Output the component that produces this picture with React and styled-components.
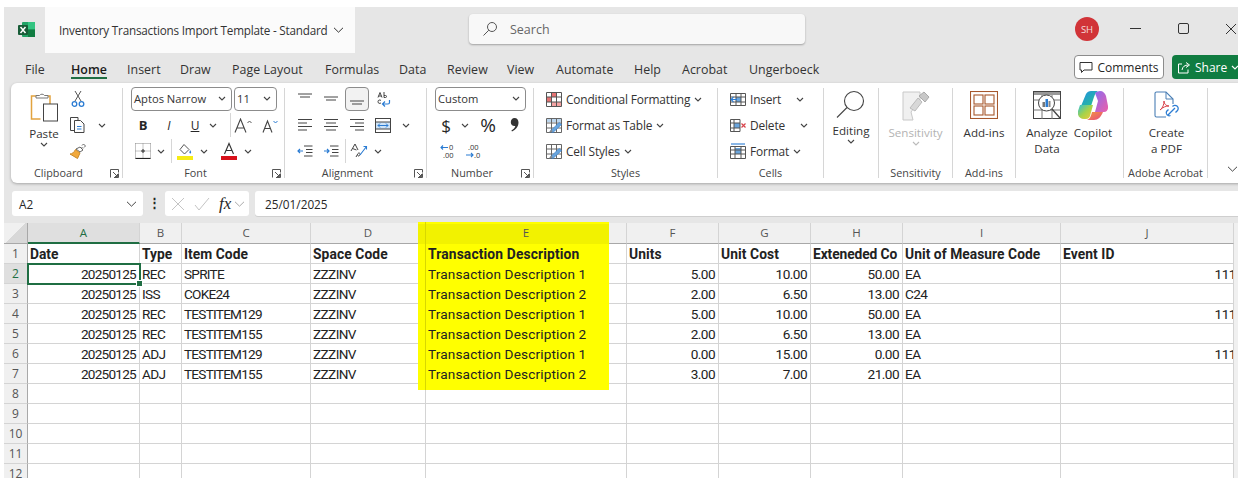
import React from "react";
import styled, { createGlobalStyle } from "styled-components";

const GlobalStyle = createGlobalStyle`
  html, body { margin: 0; padding: 0; background: #fff; }
  body { font-family: "Open Sans", "Liberation Sans", sans-serif; }
`;

const Window = styled.div`
  position: relative;
  margin: 7px 0 0 4px;
  width: 1234px;
  height: 471px;
  background: #e6e6e6;
  overflow: hidden;
  color: #262626;
  font-size: 12px;
`;

const TitleBar = styled.div`
  display: flex;
  align-items: center;
  height: 46px;
`;

const AppIcon = styled.div`
  width: 41px;
  flex: none;
  display: flex;
  justify-content: center;
  padding-left: 4px;
  box-sizing: border-box;
  margin-top: -1px;
`;

const DocTab = styled.div`
  width: 310px;
  flex: none;
  height: 46px;
  background: #fbfbfb;
  display: flex;
  align-items: center;
  padding: 0 0 1px 14px;
  box-sizing: border-box;
  gap: 5px;
  font-size: 11.7px;
  letter-spacing: -0.2px;
  color: #333;
`;

const SearchBox = styled.div`
  margin-left: 114px;
  flex: none;
  width: 336px;
  height: 30px;
  margin-top: -2px;
  background: #f8f8f8;
  border-radius: 4px;
  box-shadow: 0 1px 2px rgba(0, 0, 0, 0.3);
  display: flex;
  align-items: center;
  padding-left: 13px;
  box-sizing: border-box;
  gap: 12px;
  color: #666;
  font-size: 12.5px;
`;

const Avatar = styled.div`
  margin-left: 270px;
  margin-top: -2px;
  width: 24px;
  height: 24px;
  flex: none;
  border-radius: 50%;
  background: #d13438;
  color: #f6dede;
  font-size: 9.5px;
  display: flex;
  align-items: center;
  justify-content: center;
`;

const WinButtons = styled.div`
  margin-left: 12px;
  margin-top: -2px;
  display: flex;
  flex: none;
`;

const WinButton = styled.div`
  width: 48px;
  display: flex;
  justify-content: center;
`;

const MenuBar = styled.div`
  display: flex;
  align-items: center;
  height: 30px;
`;

const MenuTab = styled.div`
  position: relative;
  flex: none;
  width: ${(p) => p.$w}px;
  height: 30px;
  line-height: 33px;
  font-size: 12.4px;
  color: ${(p) => (p.$active ? "#1a1a1a" : "#333")};
  font-weight: ${(p) => (p.$active ? 600 : 400)};
  letter-spacing: 0.05px;
  ${(p) =>
    p.$active &&
    `&::after {
      content: "";
      position: absolute;
      left: 0;
      bottom: 4px;
      width: 36px;
      height: 2px;
      background: #1f6e43;
    }`}
`;

const MenuFirst = styled.div`
  width: 21px;
  flex: none;
`;

const CommentsButton = styled.div`
  margin-left: 253px;
  flex: none;
  width: 90px;
  height: 24px;
  box-sizing: border-box;
  margin-top: -2px;
  background: #fff;
  border: 1px solid #8c8c8c;
  border-radius: 4px;
  display: flex;
  align-items: center;
  justify-content: center;
  gap: 4px;
  font-size: 12px;
`;

const ShareButton = styled.div`
  margin-left: 8px;
  flex: none;
  width: 70px;
  height: 24px;
  margin-top: -2px;
  background: #107c41;
  border-radius: 4px;
  color: #fff;
  display: flex;
  align-items: center;
  padding-left: 5px;
  box-sizing: border-box;
  gap: 4px;
  font-size: 12px;
`;

const Ribbon = styled.div`
  margin-left: 7px;
  width: 1240px;
  height: 100px;
  box-sizing: border-box;
  padding: 5px 0;
  background: #fff;
  border-radius: 6px;
  box-shadow: 0 1px 3px rgba(0, 0, 0, 0.28);
  display: flex;
`;

const Group = styled.div`
  flex: none;
  width: ${(p) => p.$w}px;
  height: 90px;
  box-sizing: border-box;
  border-right: 1px solid ${(p) => (p.$plain ? "transparent" : "#d6d6d6")};
  display: flex;
  flex-direction: column;
`;

const GroupBody = styled.div`
  margin-top: -2px;
  height: 80px;
  display: flex;
  flex: none;
`;

const GroupLabel = styled.div`
  display: flex;
  height: 12px;
  line-height: 14px;
  font-size: 10.8px;
  color: #444;
`;

const LabelText = styled.div`
  flex: 1;
  text-align: center;
  white-space: nowrap;
`;

const Launcher = styled.div`
  width: 16px;
  flex: none;
  display: flex;
  align-items: center;
  justify-content: center;
  padding-top: 2px;
`;

const Stack = styled.div`
  display: flex;
  flex-direction: column;
  padding-left: ${(p) => p.$pl || 0}px;
`;

const ToolRow = styled.div`
  height: 26px;
  display: flex;
  align-items: center;
  flex: none;
  padding-left: ${(p) => p.$pl || 0}px;
`;

const Tool = styled.div`
  flex: none;
  width: ${(p) => p.$w || 24}px;
  height: 24px;
  display: flex;
  align-items: center;
  justify-content: center;
  box-sizing: border-box;
  font-size: ${(p) => p.$size || 12}px;
  ${(p) => p.$on && "background: #f2f2f2; border: 1px solid #8c8c8c; border-radius: 4px;"}
`;

const Divider = styled.div`
  flex: none;
  width: 1px;
  height: 24px;
  background: #d6d6d6;
`;

const SelectBox = styled.div`
  flex: none;
  width: ${(p) => p.$w}px;
  height: 24px;
  margin-right: ${(p) => p.$mr || 0}px;
  box-sizing: border-box;
  border: 1px solid #8c8c8c;
  border-radius: 4px;
  display: flex;
  align-items: center;
  justify-content: space-between;
  padding: 0 5px 1px 2px;
  font-size: 11.2px;
  color: #333;
`;

const StyleItem = styled.div`
  height: 26px;
  display: flex;
  align-items: center;
  gap: 4px;
  white-space: nowrap;
  font-size: 11.9px;
  letter-spacing: -0.15px;
  color: #333;
`;

const ItemCaret = styled.span`
  display: inline-flex;
  margin-left: ${(p) => p.$ml || 0}px;
`;

const BigTool = styled.div`
  flex: none;
  width: ${(p) => p.$w}px;
  margin-left: ${(p) => p.$ml || 0}px;
  display: flex;
  flex-direction: column;
  align-items: center;
  padding-top: ${(p) => p.$pt || 5}px;
  font-size: 11.6px;
  line-height: 16px;
  text-align: center;
  color: ${(p) => (p.$muted ? "#b3b3b3" : "#333")};
`;

const BigIcon = styled.div`
  height: ${(p) => p.$h || 34}px;
  display: flex;
  align-items: flex-start;
`;

const RibbonEnd = styled.div`
  flex: none;
  width: 48px;
  display: flex;
  justify-content: center;
  align-items: flex-end;
  height: 84px;
`;

const FormulaBar = styled.div`
  margin-top: 8px;
  height: 25px;
  display: flex;
  align-items: stretch;
  padding-left: 8px;
`;

const NameBox = styled.div`
  flex: none;
  width: 131px;
  background: #fff;
  border-radius: 3px;
  display: flex;
  align-items: center;
  justify-content: space-between;
  padding: 0 6px 0 7px;
  box-sizing: border-box;
  font-size: 11.8px;
`;

const BarDots = styled.div`
  flex: none;
  width: 22px;
  text-align: center;
  font-weight: 700;
  line-height: 22px;
  font-size: 13px;
`;

const FxBox = styled.div`
  flex: none;
  width: 84px;
  background: #fff;
  border-radius: 3px;
  display: flex;
  align-items: center;
  padding-left: 6px;
  box-sizing: border-box;
  gap: 9px;
`;

const FxText = styled.span`
  font-family: "Liberation Serif", serif;
  font-style: italic;
  font-size: 17px;
  margin-right: -6px;
`;

const FormulaInput = styled.div`
  margin-left: 6px;
  flex: 1;
  background: #fff;
  border-radius: 3px 0 0 3px;
  box-shadow: 0 1px 0 #cfcfcf;
  display: flex;
  align-items: center;
  justify-content: space-between;
  padding: 0 0 0 10px;
  font-size: 11.8px;
  overflow: hidden;
`;

const Sheet = styled.div`
  margin-top: 7px;
  display: grid;
  grid-template-columns: 24px 112px 42px 129px 115px 201px 92px 92px 92px 158px 173px 4px;
  grid-auto-rows: 20px;
  grid-template-rows: 21px;
  background: #fff;
  font-family: Roboto, "Liberation Sans", sans-serif;
`;

const ColHead = styled.div`
  background: ${(p) => (p.$selected ? "#dfdfdf" : "#f0f0f0")};
  border-right: 1px solid ${(p) => (p.$corner ? "#a8a8a8" : "#d4d4d4")};
  border-bottom: ${(p) => (p.$selected ? "2px solid #1f6e43" : "1px solid #a8a8a8")};
  box-sizing: border-box;
  text-align: center;
  line-height: 20px;
  font-family: "Open Sans", sans-serif;
  font-size: 11.5px;
  color: ${(p) => (p.$selected ? "#1f6e43" : "#555")};
`;

const Corner = styled(ColHead)`
  background: linear-gradient(135deg, #f0f0f0 50%, #d8d8d8 50.1%) no-repeat;
`;

const RowHead = styled.div`
  background: ${(p) => (p.$selected ? "#dfdfdf" : "#f0f0f0")};
  border-right: 1px solid ${(p) => (p.$selected ? "#1f6e43" : "#a8a8a8")};
  border-bottom: 1px solid #d4d4d4;
  box-sizing: border-box;
  text-align: center;
  line-height: 20px;
  font-family: "Open Sans", sans-serif;
  font-size: 12px;
  color: ${(p) => (p.$selected ? "#1f6e43" : "#555")};
`;

const Cell = styled.div`
  position: ${(p) => (p.$active ? "relative" : "static")};
  z-index: ${(p) => (p.$active ? 3 : "auto")};
  border-right: 1px solid #d4d4d4;
  border-bottom: 1px solid #d4d4d4;
  box-sizing: border-box;
  padding: 0 3px 0 2px;
  text-align: ${(p) => (p.$num ? "right" : "left")};
  line-height: 20px;
  font-size: ${(p) => (p.$bold ? 13.8 : 13.6)}px;
  font-weight: ${(p) => (p.$bold ? 700 : 400)};
  letter-spacing: ${(p) => (p.$spacing === undefined ? 0 : p.$spacing)}px;
  color: #222;
  white-space: nowrap;
  overflow: ${(p) => (p.$active ? "visible" : "hidden")};
  ${(p) =>
    p.$active &&
    `outline: 2px solid #1f6e43;
     outline-offset: -1px;
     &::after {
       content: "";
       position: absolute;
       right: -4px;
       bottom: -4px;
       width: 5px;
       height: 5px;
       background: #1f6e43;
       border: 1px solid #fff;
     }`}
`;

const CellText = styled.span`
  position: relative;
  z-index: 2;
  margin-right: ${(p) => p.$mr || 0}px;
`;

const ScrollStrip = styled.div`
  background: #f0f0f0;
`;

const Highlight = styled.div`
  position: absolute;
  left: 414px;
  top: 215px;
  width: 191px;
  height: 168px;
  z-index: 1;
  background:
    linear-gradient(#d8d800, #d8d800) 7px 0 / 1px 100% no-repeat,
    linear-gradient(#ffff00 2px, #f2f200 2px, #f2f200 22px, #ffff00 22px);
`;

const Caret = ({ color = "#444" }) => (
  <svg width="8" height="5" viewBox="0 0 8 5" fill="none">
    <path d="M1 1l3 3 3-3" stroke={color} strokeWidth="1.1" />
  </svg>
);

const WideCaret = ({ color = "#444" }) => (
  <svg width="11" height="6" viewBox="0 0 11 6" fill="none">
    <path d="M1 .8l4.5 4.4L10 .8" stroke={color} strokeWidth="1" />
  </svg>
);

const LauncherIcon = () => (
  <svg width="9" height="9" viewBox="0 0 9 9" fill="none" stroke="#555">
    <path d="M.5 8.500V.5h8v3" />
    <path d="M4 8.500h4.500V4.500" />
    <path d="M3 3l4.500 4.500M5 7.500h2.500V5" />
  </svg>
);

const ExcelIcon = () => (
  <svg width="17" height="17" viewBox="0 0 17 17">
    <rect x="4" y="1" width="13" height="15" rx="1" fill="#21a366" />
    <rect x="10" y="1" width="7" height="7.500" fill="#33c481" />
    <rect x="10" y="8.500" width="7" height="7.500" fill="#107c41" />
    <rect x="0" y="4" width="10" height="10" rx="1" fill="#185c37" />
    <path d="M2.500 6l5 6M7.500 6l-5 6" stroke="#fff" strokeWidth="1.500" />
  </svg>
);

const SearchIcon = () => (
  <svg width="16" height="16" viewBox="0 0 16 16" fill="none" stroke="#555" strokeWidth="1">
    <circle cx="10" cy="6" r="4.500" />
    <path d="M6.800 9.200L1.500 14.500" />
  </svg>
);

const PasteIcon = () => (
  <svg width="29" height="30" viewBox="0 0 29 30" fill="none">
    <path d="M8 4H1.500v23h9" stroke="#e2a33f" strokeWidth="1.500" />
    <path d="M17 4h3v8" stroke="#e2a33f" strokeWidth="1.500" />
    <path d="M6 6V3.500h3.500a3 3 0 0 1 5 0H18V6H6z" fill="#fff" stroke="#777" />
    <rect x="13.500" y="12" width="14" height="17" fill="#fff" stroke="#444" />
  </svg>
);

const ScissorsIcon = () => (
  <svg width="14" height="18" viewBox="0 0 14 18" fill="none">
    <path d="M4 11L10 1M10 11L4 1" stroke="#555" />
    <circle cx="3.500" cy="14" r="2.300" stroke="#2b7cd3" strokeWidth="1.300" />
    <circle cx="10.500" cy="14" r="2.300" stroke="#2b7cd3" strokeWidth="1.300" />
  </svg>
);

const CopyIcon = () => (
  <svg width="18" height="18" viewBox="0 0 18 18" fill="none" stroke="#444">
    <path d="M5.500 14.500h-4V1.500H9v2.500" />
    <path d="M5.500 4.500h6l3.500 3.500v8.500H5.500z" fill="#fff" />
    <path d="M8 10.500h4.500M8 13h4.500" stroke="#2b7cd3" />
  </svg>
);

const PainterIcon = () => (
  <svg width="18" height="17" viewBox="0 0 18 17" fill="none">
    <path d="M11 4l3 3-3 2-4-3z" fill="#fff" stroke="#666" />
    <path d="M13 2.500l1.500-1.500 2 2-1.500 1.500M12.500 4l1.500 1.500" stroke="#666" />
    <path d="M6.500 6.500l4.500 3.500-2.500 5.500-7.500-4.500c2 0 4-1.500 5.500-4.500z" fill="#f2a93b" stroke="#c98a2b" />
  </svg>
);

const BordersIcon = () => (
  <svg width="16" height="16" viewBox="0 0 16 16" fill="none">
    <path d="M.5.500h15M.5.500v15M15.500.500v15M8 .500v15M.5 8h15" stroke="#888" strokeDasharray="1 1" />
    <path d="M.5 15.500h15" stroke="#222" strokeWidth="1.200" />
    <path d="M6 8h4M8 6v4" stroke="#333" />
  </svg>
);

const FillIcon = () => (
  <svg width="16" height="17" viewBox="0 0 16 17" fill="none">
    <path d="M7 1.500l5 5-4.500 4.500-4.500-4.500z" stroke="#555" />
    <path d="M13 7c1.200 1.500 1.500 2.500.8 3.200-.8.500-1.600 0-1.400-1z" fill="#2b7cd3" />
    <rect x="0" y="13" width="16" height="4" fill="#f6ec15" />
  </svg>
);

const ColorIcon = () => (
  <svg width="16" height="18" viewBox="0 0 16 18" fill="none">
    <path d="M3.500 12L8 1.500 12.500 12M5 8.500h6" stroke="#333" strokeWidth="1.100" />
    <rect x="0" y="14" width="16" height="4" fill="#d8111b" />
  </svg>
);

const GrowIcon = ({ up }) => (
  <svg width="20" height="15" viewBox="0 0 20 15" fill="none">
    <path d={up ? "M1 14.500L6.500 1 12 14.500M3 10h7" : "M3 14.500L7.500 3 12 14.500M4.500 10.500h6"} stroke="#444" strokeWidth="1.100" />
    <path d={up ? "M13.500 5l2-2 2 2" : "M13.500 3l2 2 2-2"} stroke={up ? "#555" : "#2b7cd3"} />
  </svg>
);

const lineSets = {
  top: ["M1 2h14", "M3 5h10"],
  middle: ["M1 5h14", "M3 8h10"],
  bottom: ["M1 9h14", "M3 12h10"],
};

const AlignVIcon = ({ kind }) => (
  <svg width="16" height="14" viewBox="0 0 16 14" fill="none" stroke="#444">
    {lineSets[kind].map((d) => (
      <path key={d} d={d} />
    ))}
  </svg>
);

const alignRows = {
  left: ["M1 1.500h14", "M1 5h9", "M1 8.500h14", "M1 12h9"],
  center: ["M1 1.500h14", "M3 5h10", "M1 8.500h14", "M3 12h10"],
  right: ["M1 1.500h14", "M6 5h9", "M1 8.500h14", "M6 12h9"],
};

const AlignHIcon = ({ kind }) => (
  <svg width="16" height="14" viewBox="0 0 16 14" fill="none" stroke="#444">
    {alignRows[kind].map((d) => (
      <path key={d} d={d} />
    ))}
  </svg>
);

const WrapIcon = () => (
  <svg width="16" height="16" viewBox="0 0 16 16" fill="none" stroke="#444">
    <path d="M3 6.500l2-5 2 5M3.700 5h2.600M9 1v5.500M9 4.500h1.500a1 1 0 0 1 0 2H9" />
    <path d="M6 9.500c-1-.8-3-.8-3 1.200 0 2 2 2 3 1.200" />
    <path d="M14.500 9v2.500a1.500 1.500 0 0 1-1.500 1.500H8M10 10.500L7.500 13 10 15.500" stroke="#2b7cd3" strokeWidth="1.200" />
  </svg>
);

const MergeIcon = () => (
  <svg width="16" height="15" viewBox="0 0 16 15" fill="none">
    <rect x=".5" y=".5" width="15" height="14" stroke="#444" />
    <rect x="1" y="4" width="14" height="7" fill="#cfe4f7" />
    <path d="M.5 4h15M.5 11h15" stroke="#444" />
    <path d="M3 7.500h10M5 5.500l-2 2 2 2M11 5.500l2 2-2 2" stroke="#2b7cd3" />
  </svg>
);

const IndentIcon = ({ flip }) => (
  <svg width="16" height="12" viewBox="0 0 16 12" fill="none">
    <path d="M7 1h8.500M9 4.500h6.500M9 7.500h6.500M7 11h8.500" stroke="#444" />
    <path d={flip ? "M1 6h5M4 4l2 2-2 2" : "M1 6h5M3 4L1 6l2 2"} stroke="#2b7cd3" strokeWidth="1.200" />
  </svg>
);

const OrientationIcon = () => (
  <svg width="18" height="16" viewBox="0 0 18 16" fill="none">
    <path d="M1 8l4-7 3 6M2.500 5.500l4 1.500M6 14l2-3.500c.6-1 2.500-.5 2 1l-.5 1c-.6 1-2 .5-1.500-.5" stroke="#444" />
    <path d="M10 12L16.500 3.500M13.500 3.500h3v3" stroke="#2b7cd3" strokeWidth="1.100" />
  </svg>
);

const DecimalIcon = ({ more }) => (
  <svg width="16" height="16" viewBox="0 0 16 16" fill="none">
    {more ? (
      <>
        <path d="M1 12h7M6 10l2 2-2 2" stroke="#2b7cd3" strokeWidth="1.100" />
        <text x="3" y="6.500" fontSize="7.500" fontFamily="Open Sans" fill="#333">.00</text>
        <text x="9" y="14.500" fontSize="7.500" fontFamily="Open Sans" fill="#333">.0</text>
      </>
    ) : (
      <>
        <path d="M1 4.500h7M3 2.500l-2 2 2 2" stroke="#2b7cd3" strokeWidth="1.100" />
        <text x="9" y="7" fontSize="7.500" fontFamily="Open Sans" fill="#333">0</text>
        <text x="3" y="14.500" fontSize="7.500" fontFamily="Open Sans" fill="#333">.00</text>
      </>
    )}
  </svg>
);

const CommaIcon = () => (
  <svg width="9" height="14" viewBox="0 0 9 14">
    <path d="M4.500 0C7 0 8.500 1.800 8.500 4.500 8.500 8.500 5.500 12 2 13.500L1.400 12.600C3.500 11.300 5 9.700 5.300 8 2.800 8.500.8 6.800.8 4.200.8 1.800 2.300 0 4.500 0z" fill="#333" />
  </svg>
);

const CondIcon = () => (
  <svg width="16" height="15" viewBox="0 0 16 15">
    <rect x="6" y="1" width="5" height="4" fill="#e57373" />
    <rect x="1" y="5" width="5" height="5" fill="#e57373" />
    <rect x="6" y="10" width="9" height="4" fill="#f4a3a3" />
    <path d="M.5.500h15v14H.5zM5.500.500v14M10.500.500v14M.5 5h15M.5 10h15" fill="none" stroke="#555" />
  </svg>
);

const TableBrushIcon = ({ header }) => (
  <svg width="16" height="15" viewBox="0 0 16 15" fill="none">
    {header && <rect x="1" y="1" width="14" height="3" fill="#bcd6ee" />}
    <path d="M.5.500h15v14H.5zM5.500.500v14M10.500.500v14M.5 5h15M.5 10h15" stroke="#666" />
    <path d="M4 13.500l9-9 2.500 2-8.500 8z" fill="#6aa5dc" stroke="#2b7cd3" strokeWidth=".6" />
    <path d="M3 14.500l2-3 2 2z" fill="#888" />
  </svg>
);

const InsertCellIcon = () => (
  <svg width="16" height="13" viewBox="0 0 16 13" fill="none">
    <rect x="6" y="4" width="5" height="5" fill="#6aa5dc" />
    <path d="M.5.500h15v12H.5zM.5 4h15M.5 9h15M6 .500v12M11 .500v12" stroke="#555" />
    <path d="M1 6.500h6M3.500 4L1 6.500 3.500 9" stroke="#2b7cd3" strokeWidth="1.100" />
  </svg>
);

const DeleteCellIcon = () => (
  <svg width="16" height="13" viewBox="0 0 16 13" fill="none">
    <rect x="4" y="4" width="6" height="5" fill="#6aa5dc" />
    <path d="M.5.500h9.500M.5 12.500h9.500M.5.500v12M.5 4h9.500M.5 9h9.500M4 .500v12M10 .500v12" stroke="#555" />
    <path d="M11.500 4.500l4 4M15.500 4.500l-4 4" stroke="#d8434b" strokeWidth="1.200" />
  </svg>
);

const FormatCellIcon = () => (
  <svg width="16" height="16" viewBox="0 0 16 16" fill="none">
    <rect x="5" y="5" width="6" height="6" fill="#6aa5dc" />
    <path d="M.5 3.500h15v12H.5zM.5 7h15M.5 11h15M5 3.500v12M11 3.500v12" stroke="#555" />
    <path d="M1 1h14" stroke="#2b7cd3" strokeWidth="1.100" />
  </svg>
);

const EditingIcon = () => (
  <svg width="30" height="30" viewBox="0 0 30 30" fill="none" stroke="#444" strokeWidth="1.100">
    <circle cx="18" cy="12" r="9.500" />
    <path d="M11 18.500L1 28.500" />
  </svg>
);

const SensitivityIcon = () => (
  <svg width="28" height="30" viewBox="0 0 28 30" fill="none">
    <path d="M1 1h17v8L9 21l2 8H1z" fill="#f0f0f0" stroke="#c8c8c8" />
    <path d="M8 17l8-10 4 4-7 9z" fill="#d8d8d8" stroke="#bbb" />
    <path d="M17 5l5-4 5 5-4 5z" fill="#c8c8c8" stroke="#aaa" />
  </svg>
);

const AddInsIcon = () => (
  <svg width="28" height="28" viewBox="0 0 28 28" fill="none" stroke="#a6582d" strokeWidth="1.100">
    <rect x=".5" y=".5" width="27" height="27" />
    <rect x="4" y="4" width="9" height="9" />
    <rect x="15" y="4" width="9" height="9" />
    <rect x="4" y="15" width="9" height="9" />
    <rect x="15" y="15" width="9" height="9" />
  </svg>
);

const AnalyzeIcon = () => (
  <svg width="28" height="29" viewBox="0 0 28 29" fill="none">
    <rect x=".5" y=".5" width="27" height="27" stroke="#444" />
    <rect x="1" y="1" width="26" height="3" fill="#999" />
    <path d="M.5 9h27M.5 19h27M9 4v24M19 4v24" stroke="#777" />
    <circle cx="13.500" cy="12" r="8" fill="#fff" stroke="#444" />
    <rect x="9.500" y="11" width="2.500" height="5" fill="#777" />
    <rect x="12.500" y="8" width="2.500" height="8" fill="#2b7cd3" />
    <rect x="15.500" y="10" width="2" height="6" fill="#888" />
    <path d="M19 18l8 9" stroke="#444" strokeWidth="1.300" />
  </svg>
);

const CopilotIcon = () => (
  <svg width="30" height="29" viewBox="0 0 30 29">
    <defs>
      <linearGradient id="cpa" x1="0" y1="0" x2="1" y2="1">
        <stop offset="0" stopColor="#1f8fe6" />
        <stop offset="1" stopColor="#2bc48a" />
      </linearGradient>
      <linearGradient id="cpb" x1="0" y1="0" x2="1" y2="1">
        <stop offset="0" stopColor="#2fc2d6" />
        <stop offset=".5" stopColor="#a6d24a" />
        <stop offset="1" stopColor="#f5c93a" />
      </linearGradient>
      <linearGradient id="cpc" x1="0" y1="0" x2="1" y2="1">
        <stop offset="0" stopColor="#8a6cf0" />
        <stop offset="1" stopColor="#ee5fa8" />
      </linearGradient>
      <linearGradient id="cpd" x1="0" y1="0" x2="1" y2="1">
        <stop offset="0" stopColor="#f29a3c" />
        <stop offset="1" stopColor="#e8487f" />
      </linearGradient>
    </defs>
    <path d="M8 3c1-2 3-3 5-3h7c-2 1-3 3-4 6l-3 9H3z" fill="url(#cpa)" />
    <path d="M2 14h13l-3 11c-.5 2-2 3-4 3H6c-4 0-7-3-6-8z" fill="url(#cpb)" />
    <path d="M17 2c1-1 3-2 5-2 3 0 5 2 6 5l2 10c.5 3-1 6-4 6h-9l3-11z" fill="url(#cpc)" />
    <path d="M14 21h11c-2 5-5 8-9 8H9c3-1 4-4 5-8z" fill="url(#cpd)" />
  </svg>
);

const PdfIcon = () => (
  <svg width="26" height="28" viewBox="0 0 26 28" fill="none">
    <path d="M12 26H2.500a1.500 1.500 0 0 1-1.500-1.500v-22A1.500 1.500 0 0 1 2.500 1H12l7 7v5" stroke="#4a7fb5" strokeWidth="1.100" />
    <path d="M12 1v7h7" stroke="#4a7fb5" />
    <path d="M6 19c3-2 4-6 4-9 0 3 2 5 5 5-3 0-6 1-9 4z" stroke="#d8434b" />
    <path d="M14 24l7-7M16.500 24.500a3 3 0 0 1-4-4l2-2M18.500 15.500a3 3 0 0 1 5 4l-2 2" stroke="#2b7cd3" strokeWidth="1.300" />
  </svg>
);

const MinimizeIcon = () => (
  <svg width="11" height="11" viewBox="0 0 11 11"><path d="M0 5.500h11" stroke="#333" /></svg>
);

const MaximizeIcon = () => (
  <svg width="11" height="11" viewBox="0 0 11 11" fill="none"><rect x=".5" y=".5" width="10" height="10" rx="1.500" stroke="#333" /></svg>
);

const CloseIcon = () => (
  <svg width="12" height="12" viewBox="0 0 12 12"><path d="M1 1l10 10M11 1L1 11" stroke="#333" /></svg>
);

const CommentIcon = () => (
  <svg width="14" height="13" viewBox="0 0 14 13" fill="none">
    <path d="M1 1.500h12v7.500H5L2.500 11.500V9H1z" stroke="#333" />
  </svg>
);

const ShareIcon = () => (
  <svg width="14" height="13" viewBox="0 0 14 13" fill="none" stroke="#fff">
    <path d="M5 3H1.500v9H11V8.500" />
    <path d="M5 9c.5-3.500 3-5 6-5M9 1.500L12.500 4 9 6.500" />
  </svg>
);

const CrossIcon = () => (
  <svg width="14" height="14" viewBox="0 0 14 14"><path d="M1 1l12 12M13 1L1 13" stroke="#c4c4c4" /></svg>
);

const CheckIcon = () => (
  <svg width="16" height="14" viewBox="0 0 16 14" fill="none"><path d="M1 8l4 5L15 1" stroke="#c4c4c4" /></svg>
);

const tabs = [
  ["File", 46], ["Home", 56], ["Insert", 53], ["Draw", 52], ["Page Layout", 93], ["Formulas", 74],
  ["Data", 48], ["Review", 60], ["View", 49], ["Automate", 78], ["Help", 48], ["Acrobat", 67], ["Ungerboeck", 72],
];

const columns = [
  { id: "A", selected: true },
  { id: "B" }, { id: "C" }, { id: "D" }, { id: "E" }, { id: "F" },
  { id: "G" }, { id: "H" }, { id: "I" }, { id: "J" },
];

const headers = ["Date", "Type", "Item Code", "Space Code", "Transaction Description", "Units", "Unit Cost", "Exteneded Co", "Unit of Measure Code", "Event ID"];

const rows = [
  ["20250125", "REC", "SPRITE", "ZZZINV", "Transaction Description 1", "5.00", "10.00", "50.00", "EA", "111"],
  ["20250125", "ISS", "COKE24", "ZZZINV", "Transaction Description 2", "2.00", "6.50", "13.00", "C24", ""],
  ["20250125", "REC", "TESTITEM129", "ZZZINV", "Transaction Description 1", "5.00", "10.00", "50.00", "EA", "111"],
  ["20250125", "REC", "TESTITEM155", "ZZZINV", "Transaction Description 2", "2.00", "6.50", "13.00", "EA", ""],
  ["20250125", "ADJ", "TESTITEM129", "ZZZINV", "Transaction Description 1", "0.00", "15.00", "0.00", "EA", "111"],
  ["20250125", "ADJ", "TESTITEM155", "ZZZINV", "Transaction Description 2", "3.00", "7.00", "21.00", "EA", ""],
];

const numericCols = [0, 5, 6, 7, 9];
const blankRows = [8, 9, 10, 11, 12];

// Aptos Narrow has narrow capitals and digits, wider lowercase than Roboto
const colSpacing = [-0.75, -0.6, -0.75, -0.6, 0.15, -0.55, -0.55, -0.55, -0.6, -0.5];
const headSpacing = [0, 0, 0.05, 0.1, 0.15, 0.1, 0.1, -0.1, 0.05, 0.1];

const App = () => (
  <>
    <GlobalStyle />
    <Window>
      <TitleBar>
        <AppIcon><ExcelIcon /></AppIcon>
        <DocTab>
          Inventory Transactions Import Template - Standard
          <WideCaret color="#333" />
        </DocTab>
        <SearchBox>
          <SearchIcon />
          Search
        </SearchBox>
        <Avatar>SH</Avatar>
        <WinButtons>
          <WinButton><MinimizeIcon /></WinButton>
          <WinButton><MaximizeIcon /></WinButton>
          <WinButton><CloseIcon /></WinButton>
        </WinButtons>
      </TitleBar>

      <MenuBar>
        <MenuFirst />
        {tabs.map(([label, w]) => (
          <MenuTab key={label} $w={w} $active={label === "Home"}>{label}</MenuTab>
        ))}
        <CommentsButton><CommentIcon />Comments</CommentsButton>
        <ShareButton><ShareIcon />Share<Caret color="#fff" /></ShareButton>
      </MenuBar>

      <Ribbon>
        <Group $w={112}>
          <GroupBody>
            <BigTool $w={44} $ml={11} $pt={6}>
              <BigIcon><PasteIcon /></BigIcon>
              <span>Paste</span>
              <Caret />
            </BigTool>
            <Stack>
              <ToolRow><Tool><ScissorsIcon /></Tool></ToolRow>
              <ToolRow><Tool><CopyIcon /></Tool><Tool><Caret /></Tool></ToolRow>
              <ToolRow><Tool><PainterIcon /></Tool></ToolRow>
            </Stack>
          </GroupBody>
          <GroupLabel><LabelText>Clipboard</LabelText><Launcher><LauncherIcon /></Launcher></GroupLabel>
        </Group>

        <Group $w={162}>
          <GroupBody>
            <Stack $pl={8}>
              <ToolRow>
                <SelectBox $w={101} $mr={2}>Aptos Narrow<Caret /></SelectBox>
                <SelectBox $w={43}>11<Caret /></SelectBox>
              </ToolRow>
              <ToolRow>
                <Tool $size={13}><b>B</b></Tool>
                <Tool $w={28}><i>I</i></Tool>
                <Tool $w={24}><u>U</u></Tool>
                <Tool $w={12}><Caret /></Tool>
                <Tool $w={11} /><Divider />
                <Tool $w={26}><GrowIcon up /></Tool>
                <Tool $w={26}><GrowIcon /></Tool>
              </ToolRow>
              <ToolRow>
                <Tool><BordersIcon /></Tool>
                <Tool $w={12}><Caret /></Tool>
                <Tool $w={4} /><Divider />
                <Tool $w={26}><FillIcon /></Tool>
                <Tool $w={12}><Caret /></Tool>
                <Tool $w={9} />
                <Tool $w={20}><ColorIcon /></Tool>
                <Tool $w={17}><Caret /></Tool>
              </ToolRow>
            </Stack>
          </GroupBody>
          <GroupLabel><LabelText>Font</LabelText><Launcher><LauncherIcon /></Launcher></GroupLabel>
        </Group>

        <Group $w={142}>
          <GroupBody>
            <Stack $pl={8}>
              <ToolRow>
                <Tool $w={24}><AlignVIcon kind="top" /></Tool>
                <Tool $w={28}><AlignVIcon kind="middle" /></Tool>
                <Tool $w={24} $on><AlignVIcon kind="bottom" /></Tool>
                <Tool $w={28}><WrapIcon /></Tool>
              </ToolRow>
              <ToolRow>
                <Tool $w={24}><AlignHIcon kind="left" /></Tool>
                <Tool $w={28}><AlignHIcon kind="center" /></Tool>
                <Tool $w={24}><AlignHIcon kind="right" /></Tool>
                <Tool $w={28}><MergeIcon /></Tool>
                <Tool $w={18}><Caret /></Tool>
              </ToolRow>
              <ToolRow>
                <Tool $w={24}><IndentIcon /></Tool>
                <Tool $w={28}><IndentIcon flip /></Tool>
                <Divider />
                <Tool $w={26}><OrientationIcon /></Tool>
                <Tool $w={12}><Caret /></Tool>
              </ToolRow>
            </Stack>
          </GroupBody>
          <GroupLabel><LabelText>Alignment</LabelText><Launcher><LauncherIcon /></Launcher></GroupLabel>
        </Group>

        <Group $w={107}>
          <GroupBody>
            <Stack $pl={8}>
              <ToolRow><SelectBox $w={91}>Custom<Caret /></SelectBox></ToolRow>
              <ToolRow>
                <Tool $w={22} $size={17}>$</Tool>
                <Tool $w={16}><Caret /></Tool>
                <Tool $w={30} $size={19}>%</Tool>
                <Tool $w={22}><CommaIcon /></Tool>
              </ToolRow>
              <ToolRow $pl={1}>
                <Tool $w={24}><DecimalIcon /></Tool>
                <Tool $w={26}><DecimalIcon more /></Tool>
              </ToolRow>
            </Stack>
          </GroupBody>
          <GroupLabel><LabelText>Number</LabelText><Launcher><LauncherIcon /></Launcher></GroupLabel>
        </Group>

        <Group $w={184}>
          <GroupBody>
            <Stack $pl={12}>
              <StyleItem><CondIcon />Conditional Formatting<Caret /></StyleItem>
              <StyleItem><TableBrushIcon header />Format as Table<Caret /></StyleItem>
              <StyleItem><TableBrushIcon />Cell Styles<Caret /></StyleItem>
            </Stack>
          </GroupBody>
          <GroupLabel><LabelText>Styles</LabelText></GroupLabel>
        </Group>

        <Group $w={106}>
          <GroupBody>
            <Stack $pl={12}>
              <StyleItem><InsertCellIcon />Insert<ItemCaret $ml={11}><Caret /></ItemCaret></StyleItem>
              <StyleItem><DeleteCellIcon />Delete<ItemCaret $ml={11}><Caret /></ItemCaret></StyleItem>
              <StyleItem><FormatCellIcon />Format<Caret /></StyleItem>
            </Stack>
          </GroupBody>
          <GroupLabel><LabelText>Cells</LabelText></GroupLabel>
        </Group>

        <Group $w={55}>
          <GroupBody>
            <BigTool $w={54} $pt={3}>
              <BigIcon><EditingIcon /></BigIcon>
              <span>Editing</span>
              <Caret />
            </BigTool>
          </GroupBody>
        </Group>

        <Group $w={74}>
          <GroupBody>
            <BigTool $w={73} $muted>
              <BigIcon><SensitivityIcon /></BigIcon>
              <span>Sensitivity</span>
              <Caret color="#bbb" />
            </BigTool>
          </GroupBody>
          <GroupLabel><LabelText>Sensitivity</LabelText></GroupLabel>
        </Group>

        <Group $w={63}>
          <GroupBody>
            <BigTool $w={62}>
              <BigIcon><AddInsIcon /></BigIcon>
              <span>Add-ins</span>
            </BigTool>
          </GroupBody>
          <GroupLabel><LabelText>Add-ins</LabelText></GroupLabel>
        </Group>

        <Group $w={108}>
          <GroupBody>
            <BigTool $w={54} $ml={4}>
              <BigIcon><AnalyzeIcon /></BigIcon>
              <span>Analyze<br />Data</span>
            </BigTool>
            <BigTool $w={38}>
              <BigIcon><CopilotIcon /></BigIcon>
              <span>Copilot</span>
            </BigTool>
          </GroupBody>
        </Group>

        <Group $w={84}>
          <GroupBody>
            <BigTool $w={83} $ml={1}>
              <BigIcon><PdfIcon /></BigIcon>
              <span>Create<br />a PDF</span>
            </BigTool>
          </GroupBody>
          <GroupLabel><LabelText>Adobe Acrobat</LabelText></GroupLabel>
        </Group>

        <Group $w={30} $plain>
          <RibbonEnd><WideCaret /></RibbonEnd>
        </Group>
      </Ribbon>

      <FormulaBar>
        <NameBox>A2<WideCaret /></NameBox>
        <BarDots>⋮</BarDots>
        <FxBox><CrossIcon /><CheckIcon /><FxText>fx</FxText><WideCaret color="#aaa" /></FxBox>
        <FormulaInput>25/01/2025</FormulaInput>
      </FormulaBar>

      <Sheet>
        <Corner $corner />
        {columns.map((c) => (
          <ColHead key={c.id} $selected={c.selected}><CellText>{c.id}</CellText></ColHead>
        ))}
        <ScrollStrip />

        <RowHead>1</RowHead>
        {headers.map((h, c) => (
          <Cell key={h} $bold $spacing={headSpacing[c]}><CellText>{h}</CellText></Cell>
        ))}
        <ScrollStrip />

        {rows.map((row, r) => (
          <React.Fragment key={r}>
            <RowHead $selected={r === 0}>{r + 2}</RowHead>
            {row.map((val, c) => (
              <Cell key={c} $num={numericCols.includes(c)} $active={r === 0 && c === 0} $spacing={colSpacing[c]}>
                <CellText $mr={c === 9 ? -6 : 0}>{val}</CellText>
              </Cell>
            ))}
            <ScrollStrip />
          </React.Fragment>
        ))}

        {blankRows.map((n) => (
          <React.Fragment key={n}>
            <RowHead>{n}</RowHead>
            {columns.map((c) => (
              <Cell key={c.id} />
            ))}
            <ScrollStrip />
          </React.Fragment>
        ))}
      </Sheet>

      <Highlight />
    </Window>
  </>
);

export default App;
